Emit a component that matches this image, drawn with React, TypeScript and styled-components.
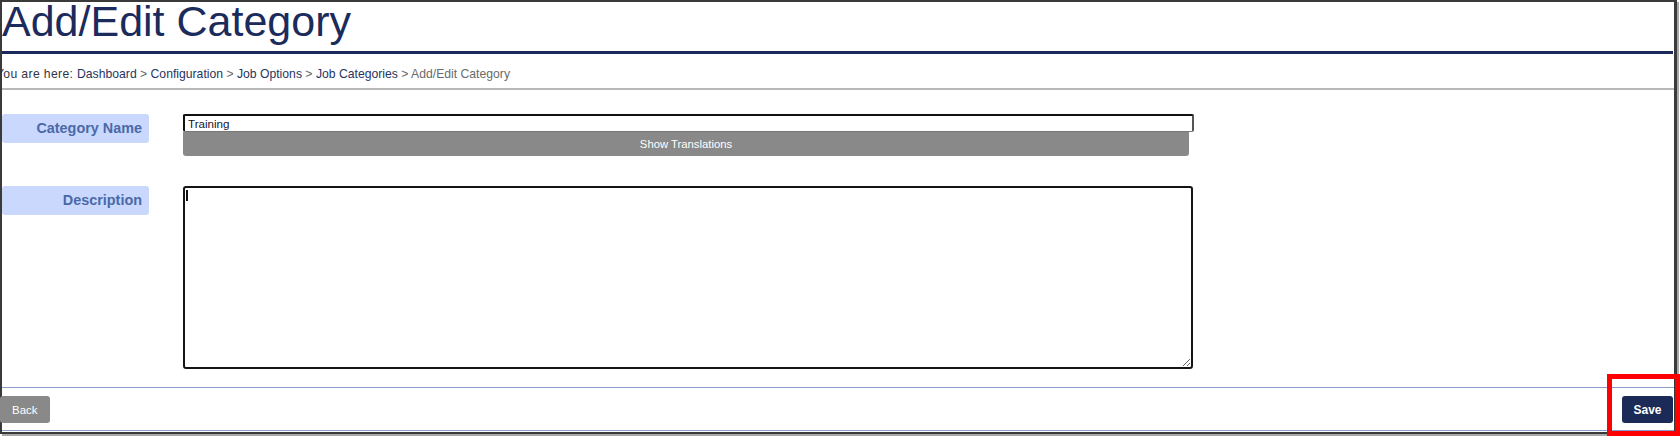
import React from "react";
import styled, { createGlobalStyle } from "styled-components";

const GlobalStyle = createGlobalStyle`
  html, body {
    margin: 0;
    padding: 0;
    background: #ffffff;
  }
  body {
    font-family: "Liberation Sans", Arial, sans-serif;
  }
  * { box-sizing: border-box; }
`;

const Stage = styled.div`
  position: relative;
  width: 1680px;
  height: 436px;
`;

const Frame = styled.div`
  width: 1677px;
  border-style: solid;
  border-color: #3a3a3a;
  border-width: 2px 3px 2px 2px;
  box-shadow: 2px 2px 0 #a8a8a8;
  display: flex;
  flex-direction: column;
`;

const Title = styled.h1`
  margin: 0;
  padding-top: 2px;
  font-family: "Liberation Sans", Arial, sans-serif;
  font-weight: 400;
  font-size: 43px;
  line-height: 34px;
  height: 36px;
  color: #1b2b5c;
  white-space: nowrap;
`;

const NavyRule = styled.div`
  margin-top: 13px;
  height: 3px;
  background: #1b2a5a;
  margin-right: 1px;
`;

const Breadcrumb = styled.nav`
  padding: 13px 0 7px 0;
  overflow: hidden;
  font-size: 12.2px;
  line-height: 14px;
  color: #3a3a44;
  white-space: nowrap;
  border-bottom: 2px solid #b9b9b9;
`;

const Trail = styled.span`
  display: inline-block;
  margin-left: -6px;
`;

const Lead = styled.span`
  letter-spacing: 0.35px;
  color: #33353f;
`;

const Crumb = styled.span<{ $current?: boolean }>`
  color: ${(p) => (p.$current ? "#6a6a6a" : "#27355f")};
`;

const Sep = styled.span`
  color: #666666;
`;

const Form = styled.div`
  display: grid;
  grid-template-columns: 147px 1011px;
  column-gap: 34px;
  row-gap: 30px;
  padding: 24px 0 18px 0;
  align-items: start;
`;

const Label = styled.div`
  height: 29px;
  background: #c9d8fc;
  border-radius: 3px;
  display: flex;
  align-items: center;
  justify-content: flex-end;
  padding: 0 7px 2px 0;
  font-size: 14.4px;
  font-weight: 700;
  color: #4b69a8;
`;

const FieldStack = styled.div`
  display: flex;
  flex-direction: column;
`;

const TextInput = styled.input`
  width: 1011px;
  height: 18px;
  margin: 0;
  padding: 0 0 0 3px;
  border-style: solid;
  border-width: 2px 2px 1px 2px;
  border-color: #111111 #555555 #777777 #111111;
  border-radius: 2px;
  font-family: "Liberation Sans", Arial, sans-serif;
  font-size: 11.6px;
  color: #15152a;
  background: #ffffff;
  outline: none;
`;

const GrayButton = styled.button`
  width: 1006px;
  height: 24px;
  margin: 0;
  padding: 0;
  border: none;
  border-radius: 0 0 3px 3px;
  background: #898989;
  color: #ffffff;
  font-family: "Liberation Sans", Arial, sans-serif;
  font-size: 11.3px;
  cursor: pointer;
`;

const AreaWrap = styled.div`
  position: relative;
  width: 1010px;
  height: 183px;
`;

const TextArea = styled.textarea`
  display: block;
  width: 1010px;
  height: 183px;
  margin: 0;
  padding: 2px;
  border: 2px solid #141414;
  border-radius: 3px;
  font-family: "Liberation Sans", Arial, sans-serif;
  font-size: 12px;
  resize: both;
  outline: none;
  caret-color: transparent;
`;

const Caret = styled.span`
  position: absolute;
  left: 3px;
  top: 4px;
  width: 2px;
  height: 11px;
  background: #111111;
  pointer-events: none;
`;

const Footer = styled.div`
  display: flex;
  justify-content: space-between;
  align-items: center;
  border-top: 1px solid #8a9cc8;
  border-bottom: 1px solid #8a9cc8;
  padding: 8px 1px 7px 0;
  margin-bottom: 1px;
`;

const ActionButton = styled.button<{ $primary?: boolean }>`
  height: 27px;
  margin: 0 0 0 ${(p) => (p.$primary ? "0" : "-2px")};
  padding: 0 ${(p) => (p.$primary ? "11.5px" : "12px")};
  border: none;
  border-radius: 3px;
  background: ${(p) => (p.$primary ? "#1c2a58" : "#898989")};
  color: #ffffff;
  font-family: "Liberation Sans", Arial, sans-serif;
  font-size: ${(p) => (p.$primary ? "12px" : "11.5px")};
  font-weight: ${(p) => (p.$primary ? 700 : 400)};
  cursor: pointer;
`;

const Highlight = styled.div`
  position: absolute;
  left: 1607px;
  top: 374px;
  width: 73px;
  height: 62px;
  border: 5px solid #ff0000;
  pointer-events: none;
`;

const crumbs = ["Dashboard", "Configuration", "Job Options", "Job Categories"];

export default function App() {
  return (
    <>
      <GlobalStyle />
      <Stage>
        <Frame>
          <Title>Add/Edit Category</Title>
          <NavyRule />
          <Breadcrumb>
            <Trail>
              <Lead>You are here: </Lead>
              {crumbs.map((c) => (
                <React.Fragment key={c}>
                  <Crumb>{c}</Crumb>
                  <Sep> &gt; </Sep>
                </React.Fragment>
              ))}
              <Crumb $current>Add/Edit Category</Crumb>
            </Trail>
          </Breadcrumb>
          <Form>
            <Label>Category Name</Label>
            <FieldStack>
              <TextInput defaultValue="Training" />
              <GrayButton>Show Translations</GrayButton>
            </FieldStack>
            <Label>Description</Label>
            <AreaWrap>
              <TextArea />
              <Caret />
            </AreaWrap>
          </Form>
          <Footer>
            <ActionButton>Back</ActionButton>
            <ActionButton $primary>Save</ActionButton>
          </Footer>
        </Frame>
        <Highlight />
      </Stage>
    </>
  );
}
